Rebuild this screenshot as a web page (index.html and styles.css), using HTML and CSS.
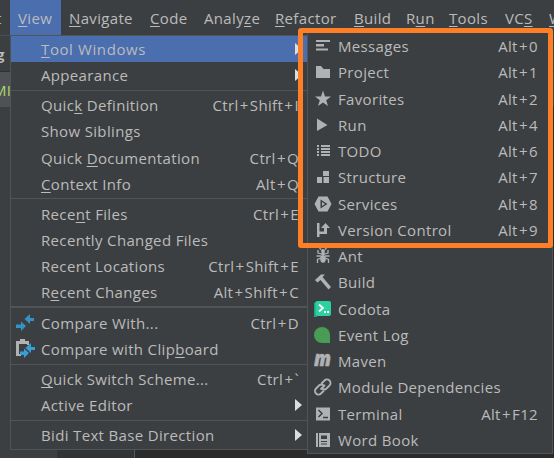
FILE: index.html
```
<!DOCTYPE html>
<html lang="en">
<head>
<meta charset="utf-8">
<title>View menu</title>
<link rel="stylesheet" href="styles.css">
</head>
<body>
<div class="window">
  <nav class="menubar">
    <span class="cut">t</span>
    <span class="top view"><span><u>V</u>iew</span></span>
    <span class="top navigate"><u>N</u>avigate</span>
    <span class="top code"><u>C</u>ode</span>
    <span class="top analyze">Analy<u>z</u>e</span>
    <span class="top refactor"><u>R</u>efactor</span>
    <span class="top build"><u>B</u>uild</span>
    <span class="top run">R<u>u</u>n</span>
    <span class="top tools"><u>T</u>ools</span>
    <span class="top vcs">VC<u>S</u></span>
    <span class="top"><u>W</u></span>
  </nav>
  <div class="workspace">
    <div class="crumb">g</div>
    <div class="tab">MI</div>
    <div class="panes"><div class="tree"></div><div class="gutter"></div><div class="editor"></div></div>
  </div>

  <div class="menu main">
    <section>
      <div class="item selected"><span class="wide"><u>T</u>ool Windows</span><i class="arrow"></i></div>
      <div class="item"><span>Appearance</span><i class="arrow"></i></div>
    </section>
    <section>
      <div class="item"><span>Quic<u>k</u> Definition</span><kbd>Ctrl<b>+</b>Shift<b>+</b>I</kbd></div>
      <div class="item"><span>Show Siblings</span></div>
      <div class="item"><span>Quick <u>D</u>ocumentation</span><kbd>Ctrl<b>+</b>Q</kbd></div>
      <div class="item"><span><u>C</u>ontext Info</span><kbd>Alt<b>+</b>Q</kbd></div>
    </section>
    <section>
      <div class="item"><span>Rece<u>n</u>t Files</span><kbd>Ctrl<b>+</b>E</kbd></div>
      <div class="item"><span>Recently Changed Files</span></div>
      <div class="item"><span>Recent Locations</span><kbd>Ctrl<b>+</b>Shift<b>+</b>E</kbd></div>
      <div class="item"><span>R<u>e</u>cent Changes</span><kbd>Alt<b>+</b>Shift<b>+</b>C</kbd></div>
    </section>
    <section class="thick">
      <div class="item"><svg class="lead" viewBox="0 0 20 20"><path class="blue" d="M1 11.500h5V8.500l5 4.500-5 5v-3H1zM19 5h-4V1L9.500 6l5.500 5V8h4z"/></svg><span>Compare With...</span><kbd>Ctrl<b>+</b>D</kbd></div>
      <div class="item"><svg class="lead" viewBox="0 0 20 20"><path class="grey" d="M1 2h4V0h5v2h4v4h-2V5H4v10h2v2H1z"/><path class="blue bright" d="M5 12.500h4V9.500l5 4.500-5 5v-3H5zM20 8h-4V4l-5.500 5 5.500 5v-3h4z"/></svg><span>Compare with Clip<u>b</u>oard</span></div>
    </section>
    <section>
      <div class="item"><span><u>Q</u>uick Switch Scheme...</span><kbd>Ctrl<b>+</b>`</kbd></div>
      <div class="item"><span>Active Editor</span><i class="arrow"></i></div>
    </section>
    <section>
      <div class="item"><span>Bidi Text Base Direction</span><i class="arrow"></i></div>
    </section>
  </div>

  <div class="menu sub">
    <div class="item"><svg viewBox="0 0 18 18"><path class="grey" d="M2 3h14v2H2zM2 7h8v2.500H2zM2 11.500h12v2H2z"/></svg><span>Messages</span><kbd>Alt<b>+</b>0</kbd></div>
    <div class="item"><svg viewBox="0 0 18 18"><path class="grey" d="M2 3h5l2.500 3H16v9H2z"/></svg><span>Project</span><kbd>Alt<b>+</b>1</kbd></div>
    <div class="item"><svg viewBox="0 0 18 18"><path class="grey" d="M9 .5l2 6h6L12.200 10.200 14 16l-5-3.600L4 16l1.800-5.800L1 6.500h6z"/></svg><span>Favorites</span><kbd>Alt<b>+</b>2</kbd></div>
    <div class="item"><svg viewBox="0 0 18 18"><path class="grey" d="M3 2.500L13.500 9 3 15z"/></svg><span>Run</span><kbd>Alt<b>+</b>4</kbd></div>
    <div class="item"><svg viewBox="0 0 18 18"><path class="grey" d="M3 3h2v2H3zM7 3h9v2H7zM3 6h2v2H3zM7 6h9v2H7zM3 9h2v2H3zM7 9h9v2H7zM3 12h2v2H3zM7 12h9v2H7z"/></svg><span>TODO</span><kbd>Alt<b>+</b>6</kbd></div>
    <div class="item"><svg viewBox="0 0 18 18"><path class="grey" d="M9 3h6v5H9zM3 9h5v6H3zM9.500 9H15v6H9.500z"/></svg><span>Structure</span><kbd>Alt<b>+</b>7</kbd></div>
    <div class="item"><svg viewBox="0 0 18 18"><path class="grey" fill-rule="evenodd" d="M4.500 1.500h9L17.500 9l-4 7.500h-9L.5 9zM6.500 4.500v9L13.500 9z"/><path class="grey" d="M8 7v4l3-2z"/></svg><span>Services</span><kbd>Alt<b>+</b>8</kbd></div>
    <div class="item"><svg viewBox="0 0 18 18"><path class="grey" d="M3 2h2.500v8.500H10V7H7l4.500-5L16 7h-3v6H5.500v3H3z"/></svg><span>Version Control</span><kbd>Alt<b>+</b>9</kbd></div>
    <div class="item"><svg viewBox="0 0 18 18"><ellipse class="grey" cx="9" cy="12" rx="2.800" ry="3.700"/><circle class="grey" cx="9" cy="7" r="2"/><circle class="grey" cx="9" cy="4" r="2"/><path class="line thin" d="M7 2.500L5.500 1M11 2.500L12.500 1M7.500 7L4 6V3M10.500 7L14 6V3M7 9H2.500M11 9h4.500M7 11l-3.500 1.500V16M11 11l3.500 1.500V16"/></svg><span>Ant</span></div>
    <div class="item"><svg viewBox="0 0 18 18"><path class="grey" d="M1 7l6-5.500h4L8.500 4l8.500 10-2.500 2.500L6.500 7 3.500 9.500z"/></svg><span>Build</span></div>
    <div class="item"><svg viewBox="0 0 18 18"><path class="teal-dark" d="M0 3l3-2v16H0z"/><rect class="teal" x="1.500" y="1" width="15.500" height="15" rx="2"/><path class="white" d="M5 4.500L9 8l-4 3.500M10 12h2M13 12h2"/></svg><span>Codota</span></div>
    <div class="item"><svg viewBox="0 0 18 18"><path class="green" d="M8 1a8 8 0 0 1 8 8v8H8A8 8 0 0 1 8 1z"/></svg><span>Event Log</span></div>
    <div class="item"><svg viewBox="0 0 18 18"><text class="maven" x="0" y="14" textLength="17" lengthAdjust="spacingAndGlyphs">m</text></svg><span>Maven</span></div>
    <div class="item"><svg viewBox="0 0 18 18"><path class="line" d="M7.500 5.500l3-3a3.400 3.400 0 0 1 5 5l-3 3a3.400 3.400 0 0 1-4.500 0M10 12.500l-3 3a3.400 3.400 0 0 1-5-5l3-3a3.400 3.400 0 0 1 4.500 0M6.500 11.500l4.500-4.500"/></svg><span>Module Dependencies</span></div>
    <div class="item"><svg viewBox="0 0 18 18"><path class="grey" d="M2 2.500h14v13H2z"/><path class="hole" d="M4.500 5l3.500 3.500L4.500 12M9 12.500h5"/></svg><span>Terminal</span><kbd>Alt<b>+</b>F12</kbd></div>
    <div class="item"><svg viewBox="0 0 18 18"><path class="grey" fill-rule="evenodd" d="M2 2h2v14H2zM5 2h11v14H5zM7 4.500v3.500h6V4.500zM7 10v1h6v-1zM7 12.500v1h6v-1z"/></svg><span>Word Book</span></div>
  </div>
  <div class="callout"></div>
</div>
</body>
</html>
```
FILE: styles.css
```
* { box-sizing: border-box; }
body { margin: 0; background: #3c3f41; color: #bbbbbb; font: 15px/26px "Open Sans", "Noto Sans", sans-serif; letter-spacing: 0.340px; }
.window { position: relative; width: 554px; height: 458px; overflow: hidden; }
u { text-decoration: underline; text-decoration-thickness: 1px; text-underline-offset: 2px; }
.menubar { display: flex; height: 35px; line-height: 37px; white-space: nowrap; }
.cut { flex: none; width: 10px; text-indent: -4px; }
.top { flex: none; }
.view { width: 51px; padding-left: 8px; margin-right: 8px; background: #4b6eaf; }
.navigate { width: 81px; }
.code { width: 54px; }
.analyze { width: 71px; }
.refactor { width: 79px; }
.build { width: 52px; }
.run { width: 43px; }
.tools { width: 56px; }
.vcs { width: 44px; }
.workspace { display: flex; flex-direction: column; height: 423px; border-top: 1px solid #4c4f51; }
.crumb { height: 36px; border-bottom: 1px solid #2f3133; font-weight: bold; line-height: 36px; text-indent: -4px; }
.tab { height: 35px; background: linear-gradient(to right, #4e5254 10px, transparent 10px); color: #a9d86e; line-height: 36px; text-indent: -7px; }
.panes { display: flex; flex: 1; }
.tree { width: 57px; }
.gutter { width: 78px; background: #313335; border-right: 1px solid #555758; }
.editor { flex: 1; background: #2b2b2b; }
.menu { position: absolute; background: #3c3f41; border: 1px solid #515456; }
.main { left: 10px; top: 35px; width: 299px; height: 415px; }
.main section { padding-bottom: 1.200px; }
.main section + section { border-top: 1px solid #515456; padding-top: 1.500px; }
.main section.thick { border-top-width: 2px; }
.item { position: relative; display: flex; justify-content: space-between; align-items: center; height: 26.250px; white-space: nowrap; }
.main .item { height: 26.200px; padding: 0 9px 0 30px; }
.main .wide { letter-spacing: 0.600px; }
.selected { background: #4b6eaf; }
kbd { font: inherit; }
kbd b { font-weight: normal; padding: 0 1.200px; }
.arrow { width: 0; height: 0; margin-right: -3px; border: 6px solid transparent; border-right: 0; border-left: 7px solid #dddddd; }
.lead { position: absolute; left: 4px; top: 3px; width: 20px; height: 20px; }
.sub { left: 307px; top: 31px; width: 246px; height: 423px; padding-top: 1px; }
.sub .item { justify-content: flex-start; padding: 0 14px 0 6px; }
.sub svg { width: 18px; height: 18px; margin-right: 6px; }
.sub kbd { margin-left: auto; }
.grey { fill: #afb1b3; }
.blue { fill: #3592c4; }
.bright { fill: #389fd6; }
.teal { fill: #2bd1a0; }
.teal-dark { fill: #16a97e; }
.green { fill: #499c54; }
.white { fill: none; stroke: #ffffff; stroke-width: 1.800; }
.line { fill: none; stroke: #afb1b3; stroke-width: 1.800; }
.thin { stroke-width: 1.300; }
.maven { fill: #afb1b3; stroke: #afb1b3; stroke-width: 0.500; font: italic 800 21px "Open Sans", "Noto Sans", sans-serif; letter-spacing: 0; }
.hole { fill: none; stroke: #3c3f41; stroke-width: 1.500; }
.callout { position: absolute; left: 298px; top: 28px; width: 255px; height: 220px; border: 5px solid #ff7f27; border-radius: 3px; }
```
